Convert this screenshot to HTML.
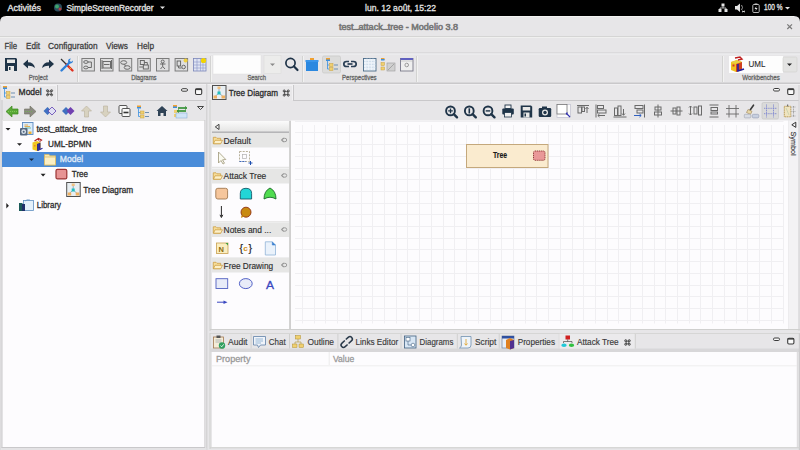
<!DOCTYPE html>
<html><head><meta charset="utf-8"><title>Modelio</title>
<style>
html,body{margin:0;padding:0;width:800px;height:450px;overflow:hidden;background:#000;font-family:"Liberation Sans",sans-serif}
svg{display:block}
</style></head><body>
<svg width="800" height="450" viewBox="0 0 800 450">
<rect x="0" y="0" width="800" height="16" fill="#000" />
<text x="7.40" y="10.80" font-family="Liberation Sans" font-size="9.45" font-weight="normal" fill="#e4e4e4" stroke="#e4e4e4" stroke-width="0.35" textLength="33.60" lengthAdjust="spacingAndGlyphs">Activités</text>
<circle cx="58" cy="7.5" r="4" fill="#2a4d5e"/><circle cx="57" cy="6.5" r="2" fill="#3fa36a"/><circle cx="60" cy="9" r="1.5" fill="#b04040"/>
<text x="66.40" y="10.80" font-family="Liberation Sans" font-size="9.45" font-weight="normal" fill="#e4e4e4" stroke="#e4e4e4" stroke-width="0.35" textLength="87.20" lengthAdjust="spacingAndGlyphs">SimpleScreenRecorder</text>
<path d="M160 6.5 L165 6.5 L162.5 9 Z" fill="#e4e4e4"/>
<text x="365.00" y="10.80" font-family="Liberation Sans" font-size="9.59" font-weight="normal" fill="#e4e4e4" stroke="#e4e4e4" stroke-width="0.3" textLength="71.00" lengthAdjust="spacingAndGlyphs">lun. 12 août, 15:22</text>
<g fill="#e4e4e4"><rect x="721.5" y="3.5" width="3" height="3"/><rect x="718.5" y="9" width="3" height="3"/><rect x="724.5" y="9" width="3" height="3"/><path d="M723 6.5 V8 M720 9 V8 H726 V9" stroke="#e4e4e4" stroke-width="0.8" fill="none"/></g>
<g fill="#e4e4e4"><path d="M735 6 H737 L740 3.5 V12 L737 9.5 H735 Z"/><path d="M741.5 5 Q743.5 7.5 741.5 10" stroke="#bbb" stroke-width="0.8" fill="none"/><path d="M742 11 L745 12 M745 11 L742 12" stroke="#e4e4e4" stroke-width="0.8"/></g>
<rect x="752.8" y="4.5" width="6.4" height="8" rx="1" fill="none" stroke="#ccc" stroke-width="0.9"/><rect x="754.6" y="3.5" width="2.8" height="1.2" fill="#ccc"/><path d="M756.5 6 L754.5 9 H756 L755.5 11 L757.5 8 H756 Z" fill="#e4e4e4"/>
<text x="764.00" y="10.20" font-family="Liberation Sans" font-size="8.14" font-weight="normal" fill="#e4e4e4" stroke="#e4e4e4" stroke-width="0.3" textLength="18.50" lengthAdjust="spacingAndGlyphs">100 %</text>
<path d="M785 7 L790 7 L787.5 9.5 Z" fill="#e4e4e4"/>
<path d="M0 22 Q0 16 6 16 H794 Q800 16 800 22 V450 H0 Z" fill="#e7e6e8"/>
<rect x="6" y="16" width="788" height="1" fill="#f4f4f3"/>
<text x="339.00" y="29.60" font-family="Liberation Sans" font-size="9.16" font-weight="normal" fill="#787878" stroke="#787878" stroke-width="0.6" textLength="119.00" lengthAdjust="spacingAndGlyphs">test<tspan dy="-1.28">_</tspan><tspan dy="1.28">​</tspan>attack<tspan dy="-1.28">_</tspan><tspan dy="1.28">​</tspan>tree - Modelio 3.8</text>
<path d="M787.3 24.3 L792 29 M792 24.3 L787.3 29" stroke="#7a7a7a" stroke-width="1.2"/>
<rect x="0" y="36" width="800" height="1" fill="#d5d5d4"/>
<rect x="0" y="37" width="800" height="1" fill="#f0f0ef"/>
<text x="4.40" y="49.00" font-family="Liberation Sans" font-size="9.88" font-weight="normal" fill="#3d3d3d" stroke="#3d3d3d" stroke-width="0.3" textLength="12.60" lengthAdjust="spacingAndGlyphs">File</text>
<text x="26.00" y="49.00" font-family="Liberation Sans" font-size="9.88" font-weight="normal" fill="#3d3d3d" stroke="#3d3d3d" stroke-width="0.3" textLength="14.00" lengthAdjust="spacingAndGlyphs">Edit</text>
<text x="48.00" y="49.00" font-family="Liberation Sans" font-size="9.88" font-weight="normal" fill="#3d3d3d" stroke="#3d3d3d" stroke-width="0.3" textLength="49.60" lengthAdjust="spacingAndGlyphs">Configuration</text>
<text x="106.00" y="49.00" font-family="Liberation Sans" font-size="9.88" font-weight="normal" fill="#3d3d3d" stroke="#3d3d3d" stroke-width="0.3" textLength="22.00" lengthAdjust="spacingAndGlyphs">Views</text>
<text x="137.00" y="49.00" font-family="Liberation Sans" font-size="9.88" font-weight="normal" fill="#3d3d3d" stroke="#3d3d3d" stroke-width="0.3" textLength="17.00" lengthAdjust="spacingAndGlyphs">Help</text>
<rect x="0" y="52.3" width="800" height="1.2" fill="#d6d5d7"/>
<rect x="0" y="53.5" width="800" height="1" fill="#f0eff1"/>
<text x="28.80" y="80.20" font-family="Liberation Sans" font-size="7.27" font-weight="normal" fill="#666666" stroke="#666666" stroke-width="0.3" textLength="18.90" lengthAdjust="spacingAndGlyphs">Project</text>
<text x="131.20" y="80.20" font-family="Liberation Sans" font-size="7.27" font-weight="normal" fill="#666666" stroke="#666666" stroke-width="0.3" textLength="25.40" lengthAdjust="spacingAndGlyphs">Diagrams</text>
<text x="247.40" y="80.20" font-family="Liberation Sans" font-size="7.27" font-weight="normal" fill="#666666" stroke="#666666" stroke-width="0.3" textLength="18.60" lengthAdjust="spacingAndGlyphs">Search</text>
<text x="342.00" y="80.20" font-family="Liberation Sans" font-size="7.27" font-weight="normal" fill="#666666" stroke="#666666" stroke-width="0.3" textLength="34.60" lengthAdjust="spacingAndGlyphs">Perspectives</text>
<text x="742.20" y="80.20" font-family="Liberation Sans" font-size="7.27" font-weight="normal" fill="#666666" stroke="#666666" stroke-width="0.3" textLength="37.60" lengthAdjust="spacingAndGlyphs">Workbenches</text>
<rect x="77" y="56" width="1" height="26" fill="#d3d3d2"/>
<rect x="78" y="56" width="1" height="26" fill="#f2f2f1"/>
<rect x="210" y="56" width="1" height="26" fill="#d3d3d2"/>
<rect x="211" y="56" width="1" height="26" fill="#f2f2f1"/>
<rect x="302" y="56" width="1" height="26" fill="#d3d3d2"/>
<rect x="303" y="56" width="1" height="26" fill="#f2f2f1"/>
<rect x="416" y="56" width="1" height="26" fill="#d3d3d2"/>
<rect x="417" y="56" width="1" height="26" fill="#f2f2f1"/>
<rect x="722" y="56" width="1" height="26" fill="#d3d3d2"/>
<rect x="723" y="56" width="1" height="26" fill="#f2f2f1"/>
<rect x="0" y="82.5" width="800" height="1.5" fill="#c9c8ca"/>
<rect x="0" y="84" width="800" height="1" fill="#f0eff1"/>
<rect x="213" y="55" width="48" height="19" fill="#fdfdfd" stroke="#e0e0df" stroke-width="0.5"/>
<rect x="264" y="55.5" width="17" height="18" fill="#ececeb" stroke="#dcdcdb" stroke-width="0.6"/>
<path d="M270 63.5 H275 L272.5 66 Z" fill="#8a8a8a"/>
<circle cx="290.5" cy="63" r="4.6" fill="none" stroke="#1e3247" stroke-width="1.7"/><path d="M293.8 66.3 L297.5 70" stroke="#1e3247" stroke-width="2.2" stroke-linecap="round"/>
<rect x="729" y="56" width="54" height="17" fill="#fdfdfd" />
<rect x="783" y="57" width="14" height="15" rx="1.5" fill="#e3e3e2" stroke="#d0d0cf" stroke-width="0.6"/>
<path d="M787 63.5 H792 L789.5 66 Z" fill="#222"/>
<text x="748.50" y="66.80" font-family="Liberation Sans" font-size="8.72" font-weight="normal" fill="#2a2a2a" stroke="#2a2a2a" stroke-width="0.1" textLength="17.00" lengthAdjust="spacingAndGlyphs">UML</text>
<g><path d="M731 62 L737 60 L742 62 V70 L736 72 L731 70 Z" fill="#f0c020"/><path d="M731 62 L737 60 L742 62 L736 64 Z" fill="#e8d040"/><path d="M736 64 L742 62 V70 L736 72 Z" fill="#d04020"/><path d="M735 58 L740 57 L742 59 L738 60" stroke="#c02020" stroke-width="1.4" fill="none"/><path d="M738 64 V71 L744 69" stroke="#2020a0" stroke-width="1.6" fill="none"/><rect x="732.5" y="64.5" width="2" height="2" fill="#d03030"/></g>
<g><path d="M5 58 H16 L17 59 V71 H5 Z" fill="#1f3448"/><rect x="7" y="59.5" width="8" height="3.5" fill="#e8e8e7"/><rect x="8" y="66" width="6" height="5" fill="#e8e8e7"/><rect x="9" y="67" width="1.5" height="3" fill="#1f3448"/></g>
<path d="M23 64 L28 59.5 V62.3 Q34 62.3 35 68 Q32 65.5 28 65.8 V68.5 Z" fill="#1f3448"/>
<path d="M54 64 L49 59.5 V62.3 Q43 62.3 42 68 Q45 65.5 49 65.8 V68.5 Z" fill="#1f3448"/>
<path d="M61 59 L67 65" stroke="#333" stroke-width="1.2"/><path d="M66.5 64.5 L72.5 70.5" stroke="#e03020" stroke-width="2.4" stroke-linecap="round"/><path d="M69.5 67.5 L71 69" stroke="#f0b020" stroke-width="1"/><path d="M61.5 70.5 L69.5 62.5" stroke="#2f7fd8" stroke-width="2.4" stroke-linecap="round"/><path d="M68 61.5 Q68 58.5 71 58.5 L69.5 60.5 L71 62 L73 60.5 Q73 63.5 70 63.5 Z" fill="#2f7fd8"/>
<rect x="81.9" y="58.5" width="12.5" height="12.5" fill="#dededf" stroke="#7c7c7c" stroke-width="1"/>
<g fill="none" stroke="#5e5e5e" stroke-width="0.9"><ellipse cx="85.9" cy="62" rx="2.2" ry="1.4"/><ellipse cx="85.9" cy="67.5" rx="2.2" ry="1.4"/><path d="M87.9 62 H91.4 V67.5 H87.9"/></g>
<rect x="100.5" y="58.5" width="12.5" height="12.5" fill="#dededf" stroke="#7c7c7c" stroke-width="1"/>
<g fill="none" stroke="#5e5e5e" stroke-width="0.9"><rect x="103" y="61.5" width="7.5" height="6.5"/><path d="M102 60 V69 M111.5 60 V69 M104 64.5 H109.5"/></g>
<rect x="119.2" y="58.5" width="12.5" height="12.5" fill="#dededf" stroke="#7c7c7c" stroke-width="1"/>
<g fill="none" stroke="#5e5e5e" stroke-width="0.9"><ellipse cx="123.7" cy="62.5" rx="3" ry="1.8"/><ellipse cx="127.2" cy="67.5" rx="3" ry="1.8"/><path d="M123.7 64.3 L125.7 65.8"/></g>
<rect x="137.8" y="58.5" width="12.5" height="12.5" fill="#dededf" stroke="#7c7c7c" stroke-width="1"/>
<g fill="none" stroke="#5e5e5e" stroke-width="0.9"><rect x="140.3" y="60.5" width="4" height="4"/><rect x="143.3" y="65" width="5" height="4"/><path d="M144.3 62.5 H147.3 V65 M139.3 67 H143.3"/></g>
<rect x="156.5" y="58.5" width="12.5" height="12.5" fill="#dededf" stroke="#7c7c7c" stroke-width="1"/>
<g fill="none" stroke="#5e5e5e" stroke-width="0.9"><circle cx="162.7" cy="61.5" r="1.5"/><path d="M162.7 63 V66.5 M160 64 H165.5 M160.5 69 L162.7 66.5 L165 69"/></g>
<rect x="175.1" y="58.5" width="12.5" height="12.5" fill="#dededf" stroke="#7c7c7c" stroke-width="1"/>
<g fill="none" stroke="#5e5e5e" stroke-width="0.9"><rect x="177.1" y="61" width="3.5" height="5"/><circle cx="183.6" cy="67" r="1.8"/><path d="M178.6 66 V68 H181.6"/></g><circle cx="185.6" cy="60.5" r="2" fill="#f0d040"/>
<g><rect x="193.5" y="58.5" width="12.5" height="12.5" fill="#dfe4f2" stroke="#7a86b8" stroke-width="0.8"/><path d="M193.5 62 H206 M193.5 65 H206 M193.5 68 H206 M197 58.5 V71 M200.5 58.5 V71 M203 58.5 V71" stroke="#8a96c8" stroke-width="0.6"/><circle cx="203.5" cy="60.5" r="2.6" fill="#f2d400"/></g>
<g><rect x="306" y="61" width="12" height="10" fill="#2b88e0"/><rect x="305.5" y="60" width="13" height="2" fill="#3a95ea"/><rect x="310" y="58" width="4" height="2" fill="#f0a030"/></g>
<rect x="322.5" y="56" width="18" height="17" rx="1.5" fill="#dcdcdb" stroke="#c8c8c7" stroke-width="0.7"/>
<g><rect x="326" y="58" width="4" height="2.5" fill="#f0a030"/><rect x="326" y="59.5" width="4" height="1.5" fill="#3a8fe0"/><path d="M327.5 61 V69 H329.5 M327.5 65 H329.5" stroke="#3a8fe0" stroke-width="0.8" fill="none"/><rect x="329.5" y="63.5" width="3.5" height="3" fill="#f0d070" stroke="#c8a040" stroke-width="0.5"/><rect x="329.5" y="67.5" width="3.5" height="3" fill="#f0d070" stroke="#c8a040" stroke-width="0.5"/><path d="M334 65 H338 M334 69 H338" stroke="#6f8fb0" stroke-width="1"/></g>
<g fill="none" stroke="#2a3f55" stroke-width="1.7"><path d="M349 61.5 H346.5 Q343.8 61.5 343.8 64 Q343.8 66.5 346.5 66.5 H349"/><path d="M351 61.5 H353.5 Q356.2 61.5 356.2 64 Q356.2 66.5 353.5 66.5 H351"/><path d="M347.5 64 H352.5"/></g>
<g><rect x="363.5" y="58.5" width="12.5" height="12.5" fill="#eef4fa" stroke="#4a6a88" stroke-width="0.9"/><path d="M364 61.5 H376 M364 64.5 H376 M364 67.5 H376 M367 58 V71 M370 58 V71 M373 58 V71" stroke="#b8cce0" stroke-width="0.6" stroke-dasharray="0.8 0.8"/></g>
<g><rect x="381" y="58" width="3.5" height="2" fill="#f0a030"/><rect x="381" y="59" width="3.5" height="1.5" fill="#3a8fe0"/><rect x="381" y="62.5" width="3.5" height="3" fill="#f0d070" stroke="#c8a040" stroke-width="0.5"/><rect x="381" y="67" width="3.5" height="3" fill="#f0d070" stroke="#c8a040" stroke-width="0.5"/><rect x="387" y="63" width="8" height="8" fill="#d0d0d0" stroke="#9a9a9a" stroke-width="0.6"/><path d="M388 70 L394 64" stroke="#888" stroke-width="0.6"/></g>
<g><rect x="400.5" y="58.5" width="12.5" height="12.5" fill="#efefef" stroke="#7a7a8a" stroke-width="0.9"/><rect x="400.5" y="58" width="12.5" height="2" fill="#6060c0"/><circle cx="406.7" cy="65" r="1.8" fill="none" stroke="#888" stroke-width="0.8"/><path d="M401 61 H413" stroke="#aaa" stroke-width="0.5"/></g>
<rect x="0" y="85" width="206.3" height="15.5" fill="#e9e8ea" />
<rect x="0" y="85" width="1" height="365" fill="#dddcde"/>
<rect x="1" y="85" width="56" height="1" fill="#f2f1f3"/>
<rect x="56" y="85" width="1" height="15" fill="#f2f1f3"/>
<rect x="57" y="85" width="1" height="16" fill="#c9c8ca"/>
<rect x="57" y="100" width="149.3" height="1" fill="#c9c8ca"/>
<text x="18.60" y="95.30" font-family="Liberation Sans" font-size="8.72" font-weight="normal" fill="#2a2a2a" stroke="#2a2a2a" stroke-width="0.3" textLength="23.10" lengthAdjust="spacingAndGlyphs">Model</text>
<g fill="none" stroke="#404040" stroke-width="0.85"><path d="M47.5 90.7 Q49.55 92.0 51.599999999999994 90.7 Q50.3 92.75 51.599999999999994 94.8 Q49.55 93.5 47.5 94.8 Q48.8 92.75 47.5 90.7 Z"/><circle cx="47.5" cy="90.7" r="1.05"/><circle cx="51.599999999999994" cy="90.7" r="1.05"/><circle cx="47.5" cy="94.8" r="1.05"/><circle cx="51.599999999999994" cy="94.8" r="1.05"/></g>
<g><rect x="3" y="86" width="4" height="2.5" fill="#f0a030"/><rect x="3" y="87.5" width="4" height="1.5" fill="#3a8fe0"/><path d="M4.5 89 V97 H6.5 M4.5 93 H6.5" stroke="#3a8fe0" stroke-width="0.8" fill="none"/><rect x="6.5" y="91.5" width="3.5" height="3" fill="#f0d070" stroke="#c8a040" stroke-width="0.5"/><rect x="6.5" y="95.5" width="3.5" height="3" fill="#f0d070" stroke="#c8a040" stroke-width="0.5"/><path d="M11 93 H15 M11 97 H15" stroke="#6f8fb0" stroke-width="1"/></g>
<rect x="181.5" y="88.7" width="6" height="2.5" rx="1.2" fill="#fafafa" stroke="#3a3a3a" stroke-width="1"/><rect x="195.5" y="88.7" width="6.2" height="5.8" rx="1.2" fill="#fafafa" stroke="#3a3a3a" stroke-width="1.1"/><rect x="195.5" y="88.7" width="6.2" height="1.4" fill="#3a3a3a"/>
<rect x="206.3" y="84" width="1" height="366" fill="#cdccce"/>
<path d="M6 111.5 L12 106 V109 H18 V114 H12 V117 Z" fill="#5aa838" stroke="#3e8a1e" stroke-width="0.7"/><path d="M8 111.5 H17" stroke="#8ad060" stroke-width="0.8" stroke-dasharray="1 1"/>
<path d="M36 111.5 L30 106 V109 H24.5 V114 H30 V117 Z" fill="#8a8a80" stroke="#6e6e60" stroke-width="0.6"/><path d="M25 111.5 H33" stroke="#70b050" stroke-width="0.8" stroke-dasharray="1 1"/>
<path d="M43.5 111 L47.5 107 L51.5 111 L47.5 115 Z" fill="#4070c0"/><path d="M48 111 L52 107 L56 111 L52 115 Z" fill="#e0e0f4" stroke="#6040b0" stroke-width="0.8"/>
<path d="M62 111 L66 107 L70 111 L66 115 Z" fill="#4070c0"/><path d="M66.5 111 L70.5 107 L74.5 111 L70.5 115 Z" fill="#7040b0"/>
<path d="M86.5 106 L91.5 111 H88.5 V117 H84.5 V111 H81.5 Z" fill="#d8d2c0" stroke="#b8b09a" stroke-width="0.6"/>
<path d="M105.5 117 L110.5 112 H107.5 V106 H103.5 V112 H100.5 Z" fill="#d8d2c0" stroke="#b8b09a" stroke-width="0.6"/>
<g fill="#f8f8f8" stroke="#444" stroke-width="0.9"><rect x="119" y="105.5" width="8" height="8" rx="1"/><rect x="122" y="108.5" width="8" height="8" rx="1"/></g><rect x="123.5" y="111.7" width="5" height="1.6" fill="#333"/>
<g><rect x="137" y="105.5" width="4" height="2.5" fill="#f0a030"/><rect x="137" y="107.0" width="4" height="1.5" fill="#3a8fe0"/><path d="M138.5 108.5 V116.5 H140.5 M138.5 112.5 H140.5" stroke="#3a8fe0" stroke-width="0.8" fill="none"/><rect x="140.5" y="111.0" width="3.5" height="3" fill="#f0d070" stroke="#c8a040" stroke-width="0.5"/><rect x="140.5" y="115.0" width="3.5" height="3" fill="#f0d070" stroke="#c8a040" stroke-width="0.5"/><path d="M145 112.5 H149 M145 116.5 H149" stroke="#6f8fb0" stroke-width="1"/></g>
<path d="M156.5 111 L162 106 L167.5 111 H166 V116 H163.5 V113 H160.5 V116 H158 V111 Z" fill="#2f4256"/>
<g><rect x="173" y="105" width="4" height="2" fill="#f0a030"/><rect x="173" y="106.5" width="4" height="1.5" fill="#3a8fe0"/><rect x="174" y="110" width="3.5" height="3" fill="#f0d070"/><rect x="174" y="114" width="3.5" height="3" fill="#f0d070"/><rect x="176" y="113" width="11" height="5" fill="#d0e4f8" stroke="#80a8d0" stroke-width="0.5"/><path d="M178 108 H186 M178 111 H186" stroke="#228822" stroke-width="1.3"/><path d="M185 106.5 L187 108 L185 109.5 M179 109.5 L177 111 L179 112.5" stroke="#228822" stroke-width="0.9" fill="none"/></g>
<path d="M197.5 106.5 H203.5 L200.5 109.5 Z" fill="none" stroke="#333" stroke-width="0.9"/>
<rect x="2" y="120" width="203" height="330" fill="#fdfcfe" />
<rect x="1.5" y="100" width="1" height="348" fill="#c9c8ca"/>
<rect x="2" y="120" width="203" height="1" fill="#e4e4e3"/>
<rect x="2" y="152" width="203" height="15" fill="#4a8cd9" />
<path d="M5.5 128 H10.5 L8.0 130.6 Z" fill="#222"/>
<path d="M17 143.2 H22 L19.5 145.79999999999998 Z" fill="#222"/>
<path d="M29 158.5 H34 L31.5 161.1 Z" fill="#1a2a40"/>
<path d="M40.6 173.8 H45.6 L43.1 176.4 Z" fill="#222"/>
<path d="M6.3 203 V208.4 L8.9 205.7 Z" fill="#222"/>
<text x="36.50" y="131.80" font-family="Liberation Sans" font-size="9.01" font-weight="normal" fill="#2b2b2b" stroke="#2b2b2b" stroke-width="0.3" textLength="60.50" lengthAdjust="spacingAndGlyphs">test<tspan dy="-1.26">_</tspan><tspan dy="1.26">​</tspan>attack<tspan dy="-1.26">_</tspan><tspan dy="1.26">​</tspan>tree</text>
<text x="48.00" y="146.90" font-family="Liberation Sans" font-size="9.01" font-weight="normal" fill="#2b2b2b" stroke="#2b2b2b" stroke-width="0.3" textLength="43.50" lengthAdjust="spacingAndGlyphs">UML-BPMN</text>
<text x="59.80" y="162.20" font-family="Liberation Sans" font-size="9.01" font-weight="normal" fill="#e0ecf8" stroke="#e0ecf8" stroke-width="0.3" textLength="23.40" lengthAdjust="spacingAndGlyphs">Model</text>
<text x="71.80" y="177.40" font-family="Liberation Sans" font-size="9.01" font-weight="normal" fill="#2b2b2b" stroke="#2b2b2b" stroke-width="0.3" textLength="16.20" lengthAdjust="spacingAndGlyphs">Tree</text>
<text x="83.20" y="192.70" font-family="Liberation Sans" font-size="9.01" font-weight="normal" fill="#2b2b2b" stroke="#2b2b2b" stroke-width="0.3" textLength="49.90" lengthAdjust="spacingAndGlyphs">Tree Diagram</text>
<text x="36.80" y="207.90" font-family="Liberation Sans" font-size="9.01" font-weight="normal" fill="#2b2b2b" stroke="#2b2b2b" stroke-width="0.3" textLength="24.20" lengthAdjust="spacingAndGlyphs">Library</text>
<g><rect x="22.5" y="122.5" width="10.5" height="12" fill="#dcecfa" stroke="#5a8ac0" stroke-width="0.9"/><path d="M24.5 125 H28 M24.5 126.5 H30" stroke="#e0a030" stroke-width="0.8"/><path d="M25 128 H31" stroke="#40b080" stroke-width="0.7"/><rect x="20" y="128" width="7.5" height="7.5" rx="1" fill="#56687e"/><circle cx="23.7" cy="131.7" r="2.4" fill="#d8e2ec"/><circle cx="23.7" cy="131.7" r="1" fill="#56687e"/><rect x="28.5" y="131.5" width="3" height="2.5" fill="#f0b030"/></g>
<g><path d="M32.5 142.5 L37 141 L40.5 142.5 V149.5 L37 151 L32.5 149.5 Z" fill="#f2c820"/><path d="M37 144 L40.5 142.5 V149.5 L37 151 Z" fill="#3a2a7a"/><path d="M34.5 141 L38.5 138.5 L41.5 140 L39.5 141.5 M38.5 138.5 V140.5" stroke="#b02020" stroke-width="1.2" fill="none"/><path d="M38.5 144 V150 L42.5 148.3" stroke="#3030a0" stroke-width="1.2" fill="none"/><rect x="34" y="145" width="1.5" height="1.5" fill="#f08030"/></g>
<g><path d="M44.5 154.5 H49 L50 155.8 H55.5 V165 H44.5 Z" fill="#f8e8b0" stroke="#d8b860" stroke-width="0.7"/><rect x="44.5" y="157" width="11" height="8" fill="#fbefc4" stroke="#d8b860" stroke-width="0.7"/></g>
<rect x="56" y="169.3" width="10.8" height="9.6" rx="1.5" fill="#e79494" stroke="#9a3434" stroke-width="1.2"/>
<g transform="translate(66.2,182) scale(1.0)"><rect x="0.5" y="0.5" width="13.5" height="14" fill="#e8eef2" stroke="#505050" stroke-width="1"/><path d="M7 4 V8 L3 11.5 M7 8 L11 11.5" stroke="#80a0b0" stroke-width="0.8" fill="none"/><rect x="5.5" y="1.5" width="3" height="2.5" fill="#f0c080"/><rect x="5.5" y="6.5" width="3" height="3" fill="#20c0c0"/><rect x="1.5" y="10.5" width="3.5" height="3" fill="#f0b060"/><rect x="9.5" y="10.5" width="3.5" height="3" fill="#f0b060"/></g>
<g><rect x="23.5" y="200.5" width="10" height="10" fill="#e4f0fa" stroke="#6090c0" stroke-width="0.8"/><path d="M25 201 Q27 199 30 200" stroke="#6090c0" stroke-width="0.7" fill="none"/><rect x="19" y="203" width="3.5" height="8" fill="#1a5a58"/><rect x="22" y="204" width="3" height="7" fill="#1f2f6a"/></g>
<rect x="204.3" y="120" width="1" height="328" fill="#d0cfd1"/>
<rect x="1.5" y="447" width="203.5" height="1" fill="#c9c8ca"/>
<rect x="1.5" y="448" width="205" height="2" fill="#e4e3e5" />
<rect x="210" y="85" width="590" height="15.5" fill="#e9e8ea" />
<rect x="210" y="85" width="83" height="1" fill="#f2f1f3"/>
<rect x="292" y="85" width="1" height="15" fill="#f2f1f3"/>
<rect x="293" y="85" width="1" height="16" fill="#c9c8ca"/>
<rect x="293" y="100" width="506" height="1" fill="#c9c8ca"/>
<rect x="209.5" y="100" width="1" height="231" fill="#cfcfce"/>
<g transform="translate(212,85) scale(1.0)"><rect x="0.5" y="0.5" width="13.5" height="14" fill="#e8eef2" stroke="#505050" stroke-width="1"/><path d="M7 4 V8 L3 11.5 M7 8 L11 11.5" stroke="#80a0b0" stroke-width="0.8" fill="none"/><rect x="5.5" y="1.5" width="3" height="2.5" fill="#f0c080"/><rect x="5.5" y="6.5" width="3" height="3" fill="#20c0c0"/><rect x="1.5" y="10.5" width="3.5" height="3" fill="#f0b060"/><rect x="9.5" y="10.5" width="3.5" height="3" fill="#f0b060"/></g>
<text x="228.75" y="95.50" font-family="Liberation Sans" font-size="9.01" font-weight="normal" fill="#2a2a2a" stroke="#2a2a2a" stroke-width="0.3" textLength="49.25" lengthAdjust="spacingAndGlyphs">Tree Diagram</text>
<g fill="none" stroke="#404040" stroke-width="0.85"><path d="M284.2 91.0 Q286.25 92.3 288.3 91.0 Q287.0 93.05 288.3 95.1 Q286.25 93.8 284.2 95.1 Q285.5 93.05 284.2 91.0 Z"/><circle cx="284.2" cy="91.0" r="1.05"/><circle cx="288.3" cy="91.0" r="1.05"/><circle cx="284.2" cy="95.1" r="1.05"/><circle cx="288.3" cy="95.1" r="1.05"/></g>
<rect x="773.5" y="88.5" width="6" height="2.5" rx="1.2" fill="#fafafa" stroke="#3a3a3a" stroke-width="1"/><rect x="787.7" y="88.7" width="6.2" height="5.8" rx="1.2" fill="#fafafa" stroke="#3a3a3a" stroke-width="1.1"/><rect x="787.7" y="88.7" width="6.2" height="1.4" fill="#3a3a3a"/>
<circle cx="450.5" cy="110.9" r="4.4" fill="none" stroke="#1f3448" stroke-width="1.9"/><path d="M453.8 114.2 L457.0 117.3" stroke="#1f3448" stroke-width="2.4" stroke-linecap="round"/>
<path d="M448.2 110.9 H452.8 M450.5 108.60000000000001 V113.2" stroke="#1f3448" stroke-width="1.3"/>
<circle cx="469.3" cy="110.9" r="4.4" fill="none" stroke="#1f3448" stroke-width="1.9"/><path d="M472.6 114.2 L475.8 117.3" stroke="#1f3448" stroke-width="2.4" stroke-linecap="round"/>
<path d="M469.3 108.3 V113.5" stroke="#1f3448" stroke-width="1.6"/>
<circle cx="488.0" cy="110.9" r="4.4" fill="none" stroke="#1f3448" stroke-width="1.9"/><path d="M491.3 114.2 L494.5 117.3" stroke="#1f3448" stroke-width="2.4" stroke-linecap="round"/>
<path d="M485.7 110.9 H490.3" stroke="#1f3448" stroke-width="1.4"/>
<g><rect x="505" y="105" width="6" height="3.5" fill="#f4f4f4" stroke="#1f3448" stroke-width="0.9"/><rect x="502.3" y="108.5" width="11.5" height="6" rx="1" fill="#1f3448"/><rect x="504.5" y="112.5" width="7" height="4.5" fill="#f0f0f0" stroke="#1f3448" stroke-width="0.8"/></g>
<g><path d="M520.7 105.5 H531 L532.2 106.7 V117.5 H520.7 Z" fill="#1f3448"/><rect x="522.7" y="107" width="7.5" height="3.5" fill="#e8e8e7"/><rect x="523.5" y="112.5" width="6" height="5" fill="#e8e8e7"/><rect x="524.5" y="113.5" width="1.5" height="3" fill="#1f3448"/></g>
<g><rect x="538.7" y="108" width="12.5" height="9" rx="1.2" fill="#1f3448"/><rect x="542" y="106.5" width="5" height="2.5" fill="#1f3448"/><circle cx="545" cy="112.5" r="3" fill="#e8e8e7"/><circle cx="545" cy="112.5" r="1.7" fill="#1f3448"/></g>
<g><rect x="557" y="104.5" width="13.5" height="13" fill="#fbfbfb" stroke="#b8b8c8" stroke-width="0.6"/><rect x="557" y="104.5" width="10" height="9.5" fill="#ffffff" stroke="#777" stroke-width="0.8"/><path d="M566 113 L570 117" stroke="#3030b0" stroke-width="1.1"/><path d="M566.5 114.5 V113 H568" stroke="#3030b0" stroke-width="0.8" fill="none"/></g>
<g fill="none" stroke="#6a6a6a" stroke-width="1"><path d="M577 105.5 H589"/><rect x="578" y="107" width="3.5" height="6"/><rect x="582" y="107" width="2.5" height="4.5"/><path d="M587 113 V107.5 M585.5 109 L587 107.2 L588.5 109"/><path d="M596 104.5 V117.5"/><rect x="597.5" y="105.5" width="6" height="3"/><rect x="597.5" y="110" width="8.5" height="3"/><path d="M598 115.5 H605 M599.5 114 L597.8 115.5 L599.5 117"/><path d="M613.5 117 H626.5"/><rect x="614.5" y="108" width="3" height="7.5"/><rect x="618" y="106" width="3" height="9.5"/><path d="M623.5 109 V115 M622 113.5 L623.5 115.3 L625 113.5"/><path d="M644.5 104.5 V117.5"/><rect x="635" y="105.5" width="8" height="3"/><rect x="637" y="110" width="6" height="3"/><path d="M634 115.5 H641 M639.5 114 L641.2 115.5 L639.5 117" stroke="#3060c0"/><path d="M658 104.5 V117.5"/><rect x="655" y="107" width="6" height="3"/><rect x="654.5" y="112" width="7" height="3"/><path d="M670.5 111 H682.5"/><rect x="673" y="108" width="3" height="6"/><rect x="677" y="107" width="3" height="8"/><rect x="694" y="107" width="3" height="7"/><rect x="698.5" y="106" width="3" height="9"/><path d="M690.5 106 V115 M689 107.5 L690.5 106 L692 107.5 M689 113.5 L690.5 115 L692 113.5"/><path d="M709.5 105 H718.5 M709.5 117 H718.5"/><rect x="711" y="107.5" width="6.5" height="3"/><rect x="711" y="112" width="6.5" height="2"/><path d="M726 108.5 H739 M726 114 H739 M729 105 V117.5 M736 105 V117.5" stroke-width="0.9"/></g>
<g><path d="M753.5 105.2 L750.3 109.8" stroke="#3a3a3a" stroke-width="1.6" stroke-linecap="round"/><path d="M748 109.5 L752 111.3 L750.5 114.3 L746.5 112.5 Z" fill="#e8d8a8" stroke="#9a8050" stroke-width="0.6"/><rect x="744.3" y="114.3" width="6.5" height="3.6" rx="0.8" fill="#d8dce4" stroke="#a0a4b0" stroke-width="0.6"/><rect x="752.3" y="114.3" width="6.5" height="3.6" rx="1.2" fill="#c8d0e0" stroke="#9098b0" stroke-width="0.6"/></g>
<rect x="762" y="102.5" width="16.5" height="16.5" rx="1.5" fill="#dadad9" stroke="#c6c6c5" stroke-width="0.7"/>
<path d="M764 108.3 H777 M764 113.7 H777 M766.5 104.5 V117.5 M773.5 104.5 V117.5" stroke="#8088d0" stroke-width="0.9" stroke-dasharray="1.2 0.6"/>
<g><rect x="784.3" y="106.3" width="6.5" height="10.5" fill="#efe4c0" stroke="#b89850" stroke-width="0.9" stroke-dasharray="1.3 0.5"/><path d="M786 108 L789 115" stroke="#a8c0a0" stroke-width="0.5"/><path d="M793.5 106 V117 M791.5 107 H795.5 M791.5 111.5 H795.5 M791.5 116 H795.5" stroke="#8a8a8a" stroke-width="0.7" stroke-dasharray="0.9 0.6"/><rect x="787" y="104.5" width="1.2" height="2" fill="#707070"/></g>
<rect x="291" y="120.5" width="497" height="208.5" fill="#fdfcfe" />
<path d="M302.5 125 V323.5 M314.5 125 V323.5 M325.5 125 V323.5 M337.5 125 V323.5 M349.5 125 V323.5 M361.5 125 V323.5 M372.5 125 V323.5 M384.5 125 V323.5 M396.5 125 V323.5 M407.5 125 V323.5 M419.5 125 V323.5 M431.5 125 V323.5 M443.5 125 V323.5 M454.5 125 V323.5 M466.5 125 V323.5 M478.5 125 V323.5 M490.5 125 V323.5 M501.5 125 V323.5 M513.5 125 V323.5 M525.5 125 V323.5 M536.5 125 V323.5 M548.5 125 V323.5 M560.5 125 V323.5 M572.5 125 V323.5 M583.5 125 V323.5 M595.5 125 V323.5 M607.5 125 V323.5 M618.5 125 V323.5 M630.5 125 V323.5 M642.5 125 V323.5 M654.5 125 V323.5 M665.5 125 V323.5 M677.5 125 V323.5 M689.5 125 V323.5 M700.5 125 V323.5 M712.5 125 V323.5 M724.5 125 V323.5 M736.5 125 V323.5 M747.5 125 V323.5 M759.5 125 V323.5 M771.5 125 V323.5 M783.5 125 V323.5 M295 121.5 H783.5 M295 132.5 H783.5 M295 144.5 H783.5 M295 156.5 H783.5 M295 168.5 H783.5 M295 179.5 H783.5 M295 191.5 H783.5 M295 203.5 H783.5 M295 214.5 H783.5 M295 226.5 H783.5 M295 238.5 H783.5 M295 249.5 H783.5 M295 261.5 H783.5 M295 273.5 H783.5 M295 285.5 H783.5 M295 296.5 H783.5 M295 308.5 H783.5 M295 320.5 H783.5" stroke="#f0eff2" stroke-width="1" fill="none"/>
<rect x="788.5" y="120.5" width="10" height="208.5" fill="#f3f2f4" />
<path d="M795.8 122.2 V127.4 L791.8 124.8 Z" fill="none" stroke="#333" stroke-width="1"/>
<text x="0" y="0" font-family="Liberation Sans" font-size="8" fill="#3a3a3a" stroke="#3a3a3a" stroke-width="0.15" textLength="24" lengthAdjust="spacingAndGlyphs" transform="translate(791,131.5) rotate(90)">Symbol</text>
<rect x="798.5" y="85" width="1" height="246" fill="#d3d2d4"/>
<rect x="210" y="329" width="590" height="1" fill="#cfcfce"/>
<rect x="466.5" y="144.5" width="81.5" height="23" fill="#faebcf" stroke="#c4a87c" stroke-width="1"/>
<text x="493.00" y="158.20" font-family="Liberation Sans" font-size="8.43" font-weight="bold" fill="#1a1a1a" stroke="#1a1a1a" stroke-width="0.15" textLength="14.00" lengthAdjust="spacingAndGlyphs">Tree</text>
<rect x="533.5" y="151" width="11.5" height="9.3" rx="1.5" fill="#e99898" stroke="#8a3030" stroke-width="0.9" stroke-dasharray="1.2 0.7"/>
<rect x="212" y="121" width="77" height="208" fill="#fdfcfe" />
<rect x="289.3" y="121" width="1.5" height="208" fill="#cacac9"/>
<defs><linearGradient id="ph" x1="0" y1="0" x2="0" y2="1"><stop offset="0" stop-color="#fbfbfb"/><stop offset="1" stop-color="#e4e4e3"/></linearGradient></defs>
<rect x="212" y="121" width="77" height="11" fill="url(#ph)" />
<rect x="212" y="131.6" width="77" height="1.2" fill="#a4a4a6"/>
<path d="M219 124.3 V129.5 L215.3 126.9 Z" fill="none" stroke="#333" stroke-width="0.9"/>
<rect x="212" y="133" width="77" height="14.5" fill="#e6e6e5" />
<g><path d="M213.3 137.3 H216 L217 138.3 H220.7 V143.7 H213.3 Z" fill="#f6dc98" stroke="#c89838" stroke-width="0.7"/><path d="M213.5 143.7 L215 140.3 H222.5 L220.7 143.7 Z" fill="#fdf0c8" stroke="#c89838" stroke-width="0.7"/></g>
<text x="223.60" y="143.60" font-family="Liberation Sans" font-size="9.01" font-weight="normal" fill="#2e2e2e" stroke="#2e2e2e" stroke-width="0.15" textLength="27.20" lengthAdjust="spacingAndGlyphs">Default</text>
<g fill="none" stroke="#8a8a8a" stroke-width="0.8"><rect x="282.5" y="138.3" width="4.2" height="3.4" rx="1.7"/><path d="M283.5 138 L281.2 140 L283.5 142"/></g>
<rect x="212" y="166.8" width="77" height="1" fill="#e0e0df"/>
<rect x="212" y="168.5" width="77" height="15.0" fill="#e6e6e5" />
<g><path d="M213.3 172.8 H216 L217 173.8 H220.7 V179.2 H213.3 Z" fill="#f6dc98" stroke="#c89838" stroke-width="0.7"/><path d="M213.5 179.2 L215 175.8 H222.5 L220.7 179.2 Z" fill="#fdf0c8" stroke="#c89838" stroke-width="0.7"/></g>
<text x="223.60" y="179.10" font-family="Liberation Sans" font-size="9.01" font-weight="normal" fill="#2e2e2e" stroke="#2e2e2e" stroke-width="0.15" textLength="42.70" lengthAdjust="spacingAndGlyphs">Attack Tree</text>
<g fill="none" stroke="#8a8a8a" stroke-width="0.8"><rect x="282.5" y="173.8" width="4.2" height="3.4" rx="1.7"/><path d="M283.5 173.5 L281.2 175.5 L283.5 177.5"/></g>
<rect x="212" y="221.3" width="77" height="1" fill="#e0e0df"/>
<rect x="212" y="222.5" width="77" height="14.5" fill="#e6e6e5" />
<g><path d="M213.3 226.8 H216 L217 227.8 H220.7 V233.2 H213.3 Z" fill="#f6dc98" stroke="#c89838" stroke-width="0.7"/><path d="M213.5 233.2 L215 229.8 H222.5 L220.7 233.2 Z" fill="#fdf0c8" stroke="#c89838" stroke-width="0.7"/></g>
<text x="223.60" y="233.10" font-family="Liberation Sans" font-size="9.01" font-weight="normal" fill="#2e2e2e" stroke="#2e2e2e" stroke-width="0.15" textLength="47.70" lengthAdjust="spacingAndGlyphs">Notes and ...</text>
<g fill="none" stroke="#8a8a8a" stroke-width="0.8"><rect x="282.5" y="227.8" width="4.2" height="3.4" rx="1.7"/><path d="M283.5 227.5 L281.2 229.5 L283.5 231.5"/></g>
<rect x="212" y="257.5" width="77" height="1" fill="#e0e0df"/>
<rect x="212" y="258" width="77" height="14.5" fill="#e6e6e5" />
<g><path d="M213.3 262.3 H216 L217 263.3 H220.7 V268.7 H213.3 Z" fill="#f6dc98" stroke="#c89838" stroke-width="0.7"/><path d="M213.5 268.7 L215 265.3 H222.5 L220.7 268.7 Z" fill="#fdf0c8" stroke="#c89838" stroke-width="0.7"/></g>
<text x="223.60" y="268.60" font-family="Liberation Sans" font-size="9.01" font-weight="normal" fill="#2e2e2e" stroke="#2e2e2e" stroke-width="0.15" textLength="49.50" lengthAdjust="spacingAndGlyphs">Free Drawing</text>
<g fill="none" stroke="#8a8a8a" stroke-width="0.8"><rect x="282.5" y="263.3" width="4.2" height="3.4" rx="1.7"/><path d="M283.5 263 L281.2 265 L283.5 267"/></g>
<path d="M218.5 152 L218.5 163 L221 160.5 L223 164 L224.5 163.2 L222.5 159.8 L225.8 159.5 Z" fill="#fafaf0" stroke="#a09878" stroke-width="0.8"/>
<rect x="239.5" y="151.5" width="10" height="10" fill="none" stroke="#b0a890" stroke-width="0.9" stroke-dasharray="2 1.2"/><rect x="242.5" y="154.5" width="4" height="4" fill="none" stroke="#b0b0b0" stroke-width="0.7"/><path d="M239.5 161.5 H246" stroke="#3060c0" stroke-width="0.9" stroke-dasharray="2 1"/><path d="M250.5 161 V165 M248.5 163 H252.5" stroke="#2050b0" stroke-width="1"/>
<rect x="215.8" y="188.3" width="11.8" height="10.7" rx="2" fill="#f6c69c" stroke="#a07850" stroke-width="0.9"/>
<path d="M240.3 199 V193.5 Q240.3 188.3 246 188.3 Q251.6 188.3 251.6 193.5 V199 Z" fill="#22d6d6" stroke="#1a5a6a" stroke-width="0.9"/>
<path d="M264 199 Q264 191 270 188 Q276 191 276 199 Q270 195.5 264 199 Z" fill="#50dc50" stroke="#1a6a2a" stroke-width="0.9"/>
<path d="M221.4 206 V216.5 M220 214.8 L221.4 217.5 L222.8 214.8" stroke="#111" stroke-width="0.9" fill="none"/>
<circle cx="246" cy="212.2" r="5" fill="#c88a10" stroke="#903010" stroke-width="0.9"/><path d="M241.5 215 L241 218 L244 216.5" fill="#c88a10"/>
<rect x="216.5" y="243" width="11.5" height="10.5" fill="#fbeec0" stroke="#c8a050" stroke-width="0.8"/><path d="M225.5 243 L228 245.5 V243 Z" fill="#40a040"/><text x="218.6" y="251.8" font-family="Liberation Sans" font-weight="bold" font-size="7.5" fill="#8a6a10">N</text>
<text x="239.5" y="251.6" font-family="Liberation Sans" font-size="11" fill="#222" stroke="#222" stroke-width="0.2" textLength="3.5" lengthAdjust="spacingAndGlyphs">{</text>
<text x="248.6" y="251.6" font-family="Liberation Sans" font-size="11" fill="#222" stroke="#222" stroke-width="0.2" textLength="3.5" lengthAdjust="spacingAndGlyphs">}</text>
<text x="243.3" y="251" font-family="Liberation Sans" font-weight="bold" font-size="7.5" fill="#d09020" textLength="4.6" lengthAdjust="spacingAndGlyphs">c</text>
<path d="M265.3 241.8 H272.3 L275.5 245 V255 H265.3 Z" fill="#eaf2fb" stroke="#90b4d8" stroke-width="0.8"/><path d="M272.3 241.8 V245 H275.5" fill="#3a80d0" stroke="#3a80d0" stroke-width="0.6"/>
<rect x="216" y="278.7" width="11.7" height="9.8" fill="#e8ecf8" stroke="#5060c0" stroke-width="0.9"/>
<ellipse cx="245.8" cy="283.6" rx="6.4" ry="5" fill="#e8ecf8" stroke="#4050c0" stroke-width="0.9"/>
<text x="266" y="289" font-family="Liberation Sans" font-size="11.5" fill="#3a48c0" stroke="#3a48c0" stroke-width="0.3" textLength="8" lengthAdjust="spacingAndGlyphs">A</text>
<path d="M217 302.2 H224" stroke="#3a48c0" stroke-width="1"/><path d="M223.5 300.4 L227.5 302.2 L223.5 304 Z" fill="#3a48c0"/>
<rect x="210" y="331" width="590" height="119" fill="#e7e6e8" />
<rect x="210" y="333" width="590" height="1" fill="#d6d6d5"/>
<rect x="209.5" y="333" width="1" height="116" fill="#cfcfce"/>
<rect x="210" y="348.5" width="590" height="3.5" fill="#d8d7d9"/>
<rect x="250.6" y="334" width="1" height="14.5" fill="#d0d0cf"/>
<rect x="289" y="334" width="1" height="14.5" fill="#d0d0cf"/>
<rect x="337.4" y="334" width="1" height="14.5" fill="#d0d0cf"/>
<rect x="400.5" y="334" width="1" height="14.5" fill="#d0d0cf"/>
<rect x="456.8" y="334" width="1" height="14.5" fill="#d0d0cf"/>
<rect x="498.7" y="334" width="1" height="14.5" fill="#d0d0cf"/>
<rect x="558.8" y="334" width="1" height="14.5" fill="#d0d0cf"/>
<rect x="634.8" y="334" width="1" height="14.5" fill="#d0d0cf"/>
<rect x="559.3" y="333.8" width="75" height="14.7" fill="#ebeaec" />
<text x="228.00" y="345.20" font-family="Liberation Sans" font-size="9.01" font-weight="normal" fill="#3a3a3a" stroke="#3a3a3a" stroke-width="0.15" textLength="19.50" lengthAdjust="spacingAndGlyphs">Audit</text>
<text x="268.75" y="345.20" font-family="Liberation Sans" font-size="9.01" font-weight="normal" fill="#3a3a3a" stroke="#3a3a3a" stroke-width="0.15" textLength="16.85" lengthAdjust="spacingAndGlyphs">Chat</text>
<text x="307.50" y="345.20" font-family="Liberation Sans" font-size="9.01" font-weight="normal" fill="#3a3a3a" stroke="#3a3a3a" stroke-width="0.15" textLength="26.50" lengthAdjust="spacingAndGlyphs">Outline</text>
<text x="355.50" y="345.20" font-family="Liberation Sans" font-size="9.01" font-weight="normal" fill="#3a3a3a" stroke="#3a3a3a" stroke-width="0.15" textLength="42.70" lengthAdjust="spacingAndGlyphs">Links Editor</text>
<text x="419.60" y="345.20" font-family="Liberation Sans" font-size="9.01" font-weight="normal" fill="#3a3a3a" stroke="#3a3a3a" stroke-width="0.15" textLength="33.80" lengthAdjust="spacingAndGlyphs">Diagrams</text>
<text x="475.00" y="345.20" font-family="Liberation Sans" font-size="9.01" font-weight="normal" fill="#3a3a3a" stroke="#3a3a3a" stroke-width="0.15" textLength="21.30" lengthAdjust="spacingAndGlyphs">Script</text>
<text x="517.70" y="345.20" font-family="Liberation Sans" font-size="9.01" font-weight="normal" fill="#3a3a3a" stroke="#3a3a3a" stroke-width="0.15" textLength="37.30" lengthAdjust="spacingAndGlyphs">Properties</text>
<text x="577.00" y="345.20" font-family="Liberation Sans" font-size="9.01" font-weight="normal" fill="#3a3a3a" stroke="#3a3a3a" stroke-width="0.15" textLength="41.60" lengthAdjust="spacingAndGlyphs">Attack Tree</text>
<g><rect x="213.5" y="337" width="10" height="11" fill="#f4ecd8" stroke="#a07850" stroke-width="0.8"/><rect x="216.5" y="335.5" width="4" height="2.5" fill="#555"/><path d="M215.5 340 H221.5 M215.5 342 H221.5" stroke="#8090a0" stroke-width="0.6"/><circle cx="222" cy="345.5" r="3.2" fill="#30a060"/><path d="M220.5 345.5 L221.7 346.8 L223.7 344.3" stroke="#fff" stroke-width="0.8" fill="none"/></g>
<g><path d="M253.5 336.5 H265.5 V345 H260.5 L258.5 347.5 L257.5 345 H253.5 Z" fill="#f0f4fa" stroke="#6080a8" stroke-width="0.8"/><path d="M255.5 339 H263 M255.5 341 H263 M255.5 343 H261" stroke="#6090c0" stroke-width="0.6"/></g>
<g><rect x="295.5" y="335.5" width="5" height="3.5" fill="#f0d070" stroke="#b09030" stroke-width="0.5"/><rect x="292.5" y="344" width="4.5" height="3.5" fill="#f0d070" stroke="#b09030" stroke-width="0.5"/><rect x="299" y="344" width="4.5" height="3.5" fill="#f0d070" stroke="#b09030" stroke-width="0.5"/><path d="M298 339 V342 H295 V344 M298 342 H301 V344" stroke="#b09030" stroke-width="0.6" fill="none"/></g>
<g fill="none" stroke="#2a3a4a" stroke-width="1.5"><g transform="translate(344.8,343.8) rotate(-42)"><path d="M2.2 -2.4 H-1.6 Q-4.2 -2.4 -4.2 0 Q-4.2 2.4 -1.6 2.4 H1.6"/></g><g transform="translate(348.6,340.2) rotate(-42)"><path d="M-2.2 2.4 H1.6 Q4.2 2.4 4.2 0 Q4.2 -2.4 1.6 -2.4 H-1.6"/></g></g>
<g><rect x="404.5" y="336" width="11.5" height="12" fill="#d8e6f4" stroke="#406080" stroke-width="0.8"/><rect x="406" y="337.5" width="4" height="3.5" fill="#fff" stroke="#406080" stroke-width="0.6"/><circle cx="413" cy="345" r="1.8" fill="#fff" stroke="#406080" stroke-width="0.6"/><path d="M408 341 V345 H411" stroke="#406080" stroke-width="0.6" fill="none"/></g>
<g><path d="M461 336.5 H471 V345 Q471 348 468 348 H459.5 Q461.5 347 461.5 345 Z" fill="#eef4fa" stroke="#7090b0" stroke-width="0.8"/><path d="M466 339 V345 M464.5 343.5 L466 345.3 L467.5 343.5" stroke="#e0a020" stroke-width="0.8" fill="none"/></g>
<g><rect x="502" y="336" width="12" height="12" fill="#e8eef6" stroke="#7080a0" stroke-width="0.7"/><rect x="502" y="336" width="12" height="2.5" fill="#3050a0"/><path d="M506 348 V340 L510 338 L514 340 V348 L510 349.5 Z" fill="#e08020"/><path d="M510 341 L514 340 V348 L510 349.5 Z" fill="#503090"/></g>
<g><rect x="565.5" y="335.5" width="4.5" height="4" fill="#d02020"/><path d="M567.7 339.5 V341.5 M563.5 343 V341.5 H572 V343" stroke="#333" stroke-width="0.6" fill="none"/><ellipse cx="564" cy="345.3" rx="2.7" ry="1.7" fill="#20c8d8"/><ellipse cx="571.5" cy="345.3" rx="2.7" ry="1.7" fill="#30c040"/></g>
<g fill="none" stroke="#404040" stroke-width="0.85"><path d="M625.7 340.7 Q627.5 342.0 629.3 340.7 Q628.0 342.5 629.3 344.3 Q627.5 343.0 625.7 344.3 Q627.0 342.5 625.7 340.7 Z"/><circle cx="625.7" cy="340.7" r="1.05"/><circle cx="629.3" cy="340.7" r="1.05"/><circle cx="625.7" cy="344.3" r="1.05"/><circle cx="629.3" cy="344.3" r="1.05"/></g>
<rect x="773.5" y="338" width="6" height="2.5" rx="1.2" fill="#fafafa" stroke="#3a3a3a" stroke-width="1"/><rect x="787.7" y="338.2" width="6.2" height="5.8" rx="1.2" fill="#fafafa" stroke="#3a3a3a" stroke-width="1.1"/><rect x="787.7" y="338.2" width="6.2" height="1.4" fill="#3a3a3a"/>
<rect x="212" y="352" width="585" height="95" fill="#fdfcfe" />
<rect x="796.8" y="352" width="1" height="96" fill="#dcdbdd"/>
<rect x="798.8" y="333" width="1.2" height="117" fill="#cdccce"/>
<rect x="210" y="447.3" width="590" height="1" fill="#d0d0cf"/>
<text x="215.90" y="361.60" font-family="Liberation Sans" font-size="8.87" font-weight="normal" fill="#9a9a9a" stroke="#9a9a9a" stroke-width="0.3" textLength="34.60" lengthAdjust="spacingAndGlyphs">Property</text>
<text x="333.00" y="361.60" font-family="Liberation Sans" font-size="8.87" font-weight="normal" fill="#9a9a9a" stroke="#9a9a9a" stroke-width="0.3" textLength="21.30" lengthAdjust="spacingAndGlyphs">Value</text>
<rect x="328.7" y="352" width="1" height="13" fill="#ececec"/>
<rect x="212" y="365.3" width="585" height="1" fill="#eeeeee"/>
</svg>
</body></html>
